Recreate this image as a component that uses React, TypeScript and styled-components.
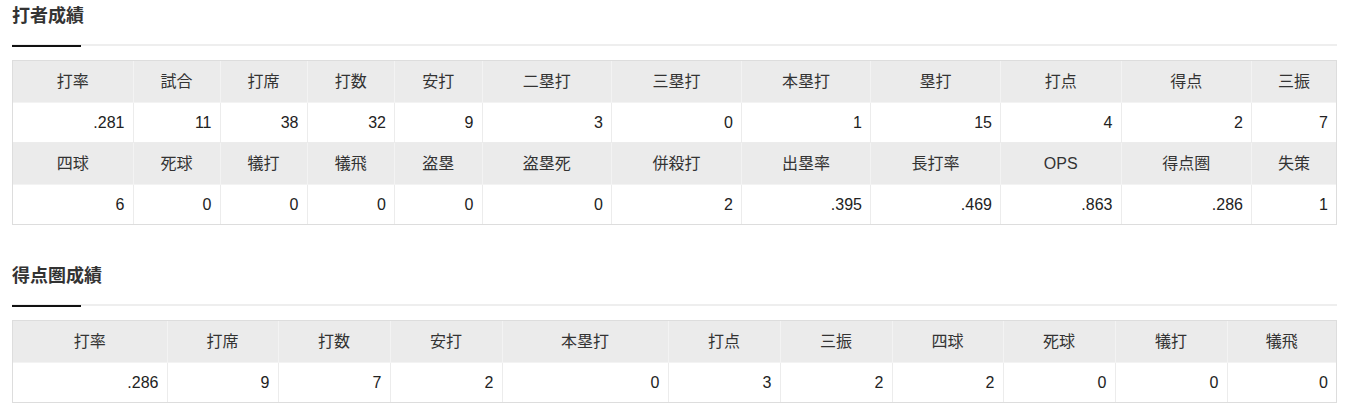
import React from 'react';
import styled, { createGlobalStyle } from 'styled-components';

const GlobalStyle = createGlobalStyle`
	body {
		margin: 0;
		background: #fff;
		color: #333;
		font-family: "Liberation Sans", "Noto Sans CJK JP", sans-serif;
	}
`;

const PageStyleC = styled.div`
	padding: 0 13px 0 12px;
`;

const SectionStyleC = styled.section`
	& + & {
		margin-top: 35px;
	}
`;

const HeadingStyleC = styled.h2`
	position: relative;
	margin: 0;
	padding: 3px 0 14px;
	font-size: 18px;
	line-height: 27px;
	font-weight: bold;
	color: #333;
	border-bottom: 2px solid #eee;

	&::after {
		content: '';
		position: absolute;
		left: 0;
		bottom: -3px;
		width: 69px;
		height: 2px;
		background: #111;
	}
`;

const TableWrapStyleC = styled.div`
	margin-top: 14px;
	border: 1px solid #ddd;
`;

const TableStyleC = styled.table`
	width: 100%;
	table-layout: fixed;
	border-collapse: collapse;
	border-style: hidden;
	font-size: 16px;
`;

const ColStyleC = styled.col<{ $w: number }>`
	width: ${(p) => p.$w}px;
`;

const HeadCellStyleC = styled.th`
	height: 41px;
	padding: 0 8px;
	background: #ebebeb;
	border: 1px solid #f3f3f3;
	font-weight: normal;
	text-align: center;
	line-height: 24px;
	color: #333;
`;

const DataCellStyleC = styled.td`
	height: 39px;
	padding: 0 8px;
	background: #fff;
	border: 1px solid #ececec;
	text-align: right;
	line-height: 24px;
	color: #222;
`;

interface IStatRow {
	labels: string[];
	values: string[];
}

interface IStatTable {
	title: string;
	widths: number[];
	rows: IStatRow[];
}

const batting: IStatTable = {
	title: '打者成績',
	widths: [120, 87, 87, 87.5, 87.5, 129.5, 130, 129, 130, 120.5, 130.5, 84.5],
	rows: [
		{
			labels: ['打率', '試合', '打席', '打数', '安打', '二塁打', '三塁打', '本塁打', '塁打', '打点', '得点', '三振'],
			values: ['.281', '11', '38', '32', '9', '3', '0', '1', '15', '4', '2', '7'],
		},
		{
			labels: ['四球', '死球', '犠打', '犠飛', '盗塁', '盗塁死', '併殺打', '出塁率', '長打率', 'OPS', '得点圏', '失策'],
			values: ['6', '0', '0', '0', '0', '0', '2', '.395', '.469', '.863', '.286', '1'],
		},
	],
};

const scoring: IStatTable = {
	title: '得点圏成績',
	widths: [154, 111, 112, 112, 166, 112, 112, 111, 112, 112, 109],
	rows: [
		{
			labels: ['打率', '打席', '打数', '安打', '本塁打', '打点', '三振', '四球', '死球', '犠打', '犠飛'],
			values: ['.286', '9', '7', '2', '0', '3', '2', '2', '0', '0', '0'],
		},
	],
};

function StatSection({ title, widths, rows }: IStatTable) {
	return (
		<SectionStyleC>
			<HeadingStyleC>{title}</HeadingStyleC>
			<TableWrapStyleC>
				<TableStyleC>
					<colgroup>
						{widths.map((w, i) => (
							<ColStyleC key={i} $w={w} />
						))}
					</colgroup>
					<tbody>
						{rows.map((row, r) => (
							<React.Fragment key={r}>
								<tr>
									{row.labels.map((label) => (
										<HeadCellStyleC key={label}>{label}</HeadCellStyleC>
									))}
								</tr>
								<tr>
									{row.values.map((value, i) => (
										<DataCellStyleC key={i}>{value}</DataCellStyleC>
									))}
								</tr>
							</React.Fragment>
						))}
					</tbody>
				</TableStyleC>
			</TableWrapStyleC>
		</SectionStyleC>
	);
}

function App() {
	return (
		<PageStyleC>
			<GlobalStyle />
			<StatSection {...batting} />
			<StatSection {...scoring} />
		</PageStyleC>
	);
}

export default App;
